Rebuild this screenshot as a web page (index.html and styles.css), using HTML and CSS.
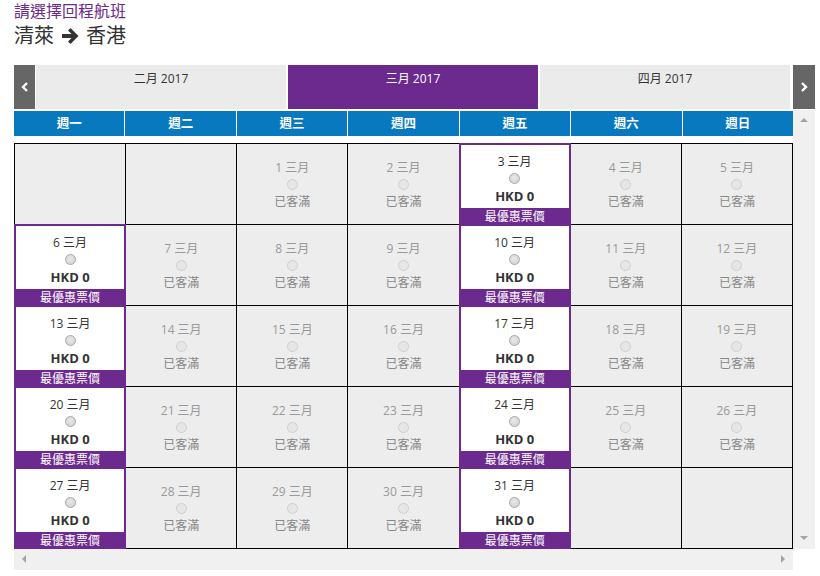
FILE: index.html
```html
<!DOCTYPE html>
<html lang="zh-Hant">
<head>
<meta charset="utf-8">
<link rel="stylesheet" href="styles.css">
</head>
<body>
<div class="page">
  <h1 class="title">請選擇回程航班</h1>
  <div class="route">清萊 <svg class="route-arrow" viewBox="0 0 20 18" width="20" height="18"><path d="M2 7h9.5L8 3.5 10.5 1 18.5 9 10.5 17 8 14.5 11.5 11H2z" fill="#333"/></svg> 香港</div>

  <div class="monthnav">
    <div class="navbtn"><svg viewBox="0 0 8 10" width="8" height="10"><path d="M6 1 2 5 6 9" fill="none" stroke="#fff" stroke-width="2.4"/></svg></div>
    <div class="tab">二月 2017</div>
    <div class="tab active">三月 2017</div>
    <div class="tab">四月 2017</div>
    <div class="navbtn right"><svg viewBox="0 0 8 10" width="8" height="10"><path d="M2 1 6 5 2 9" fill="none" stroke="#fff" stroke-width="2.4"/></svg></div>
  </div>

  <div class="scroller">
    <div class="main">
      <div class="weekdays">
        <div>週一</div><div>週二</div><div>週三</div><div>週四</div><div>週五</div><div>週六</div><div>週日</div>
      </div>
      <div class="grid">
        <div class="cell empty"></div>
        <div class="cell empty"></div>
        <div class="cell full"><div class="info"><div class="date">1 三月</div><span class="radio"></span><div class="status">已客滿</div></div></div>
        <div class="cell full"><div class="info"><div class="date">2 三月</div><span class="radio"></span><div class="status">已客滿</div></div></div>
        <div class="cell avail"><div class="info"><div class="date">3 三月</div><span class="radio"></span><div class="price">HKD 0</div></div><div class="best">最優惠票價</div></div>
        <div class="cell full"><div class="info"><div class="date">4 三月</div><span class="radio"></span><div class="status">已客滿</div></div></div>
        <div class="cell full"><div class="info"><div class="date">5 三月</div><span class="radio"></span><div class="status">已客滿</div></div></div>

        <div class="cell avail"><div class="info"><div class="date">6 三月</div><span class="radio"></span><div class="price">HKD 0</div></div><div class="best">最優惠票價</div></div>
        <div class="cell full"><div class="info"><div class="date">7 三月</div><span class="radio"></span><div class="status">已客滿</div></div></div>
        <div class="cell full"><div class="info"><div class="date">8 三月</div><span class="radio"></span><div class="status">已客滿</div></div></div>
        <div class="cell full"><div class="info"><div class="date">9 三月</div><span class="radio"></span><div class="status">已客滿</div></div></div>
        <div class="cell avail"><div class="info"><div class="date">10 三月</div><span class="radio"></span><div class="price">HKD 0</div></div><div class="best">最優惠票價</div></div>
        <div class="cell full"><div class="info"><div class="date">11 三月</div><span class="radio"></span><div class="status">已客滿</div></div></div>
        <div class="cell full"><div class="info"><div class="date">12 三月</div><span class="radio"></span><div class="status">已客滿</div></div></div>

        <div class="cell avail"><div class="info"><div class="date">13 三月</div><span class="radio"></span><div class="price">HKD 0</div></div><div class="best">最優惠票價</div></div>
        <div class="cell full"><div class="info"><div class="date">14 三月</div><span class="radio"></span><div class="status">已客滿</div></div></div>
        <div class="cell full"><div class="info"><div class="date">15 三月</div><span class="radio"></span><div class="status">已客滿</div></div></div>
        <div class="cell full"><div class="info"><div class="date">16 三月</div><span class="radio"></span><div class="status">已客滿</div></div></div>
        <div class="cell avail"><div class="info"><div class="date">17 三月</div><span class="radio"></span><div class="price">HKD 0</div></div><div class="best">最優惠票價</div></div>
        <div class="cell full"><div class="info"><div class="date">18 三月</div><span class="radio"></span><div class="status">已客滿</div></div></div>
        <div class="cell full"><div class="info"><div class="date">19 三月</div><span class="radio"></span><div class="status">已客滿</div></div></div>

        <div class="cell avail"><div class="info"><div class="date">20 三月</div><span class="radio"></span><div class="price">HKD 0</div></div><div class="best">最優惠票價</div></div>
        <div class="cell full"><div class="info"><div class="date">21 三月</div><span class="radio"></span><div class="status">已客滿</div></div></div>
        <div class="cell full"><div class="info"><div class="date">22 三月</div><span class="radio"></span><div class="status">已客滿</div></div></div>
        <div class="cell full"><div class="info"><div class="date">23 三月</div><span class="radio"></span><div class="status">已客滿</div></div></div>
        <div class="cell avail"><div class="info"><div class="date">24 三月</div><span class="radio"></span><div class="price">HKD 0</div></div><div class="best">最優惠票價</div></div>
        <div class="cell full"><div class="info"><div class="date">25 三月</div><span class="radio"></span><div class="status">已客滿</div></div></div>
        <div class="cell full"><div class="info"><div class="date">26 三月</div><span class="radio"></span><div class="status">已客滿</div></div></div>

        <div class="cell avail"><div class="info"><div class="date">27 三月</div><span class="radio"></span><div class="price">HKD 0</div></div><div class="best">最優惠票價</div></div>
        <div class="cell full"><div class="info"><div class="date">28 三月</div><span class="radio"></span><div class="status">已客滿</div></div></div>
        <div class="cell full"><div class="info"><div class="date">29 三月</div><span class="radio"></span><div class="status">已客滿</div></div></div>
        <div class="cell full"><div class="info"><div class="date">30 三月</div><span class="radio"></span><div class="status">已客滿</div></div></div>
        <div class="cell avail"><div class="info"><div class="date">31 三月</div><span class="radio"></span><div class="price">HKD 0</div></div><div class="best">最優惠票價</div></div>
        <div class="cell empty"></div>
        <div class="cell empty"></div>
      </div>
    </div>
    <div class="vbar"><span class="arr up"></span><span class="arr down"></span></div>
    <div class="hbar"><span class="arr left"></span><span class="arr right"></span></div>
    <div class="corner"></div>
  </div>
</div>
</body>
</html>
```

FILE: styles.css
```css
* { box-sizing: border-box; }
html, body { margin: 0; padding: 0; background: #fff; }
body {
  font-family: "Open Sans", "Noto Sans CJK TC", sans-serif;
  color: #333;
}
.page {
  width: 801px;
  margin-left: 14px;
}
.title {
  margin: 0;
  padding-top: 0;
  font-size: 16px;
  font-weight: normal;
  line-height: 22px;
  color: #6c2a8e;
}
.route {
  font-size: 20px;
  line-height: 26px;
  color: #333;
  display: flex;
  align-items: center;
  gap: 5px;
  margin-top: 1px;
}
.route-arrow { display: block; margin: 0 1px; }

.monthnav {
  margin-top: 16px;
  height: 44px;
  display: flex;
  gap: 2px;
}
.navbtn {
  width: 21px;
  background: #666;
  display: flex;
  align-items: center;
  justify-content: center;
}
.navbtn.right { width: 22px; margin-left: 1px; }
.navbtn:first-child { margin-right: -1px; }
.tab {
  flex: 1;
  background: #ebebeb;
  color: #333;
  font-size: 12px;
  text-align: center;
  padding-top: 4px;
}
.tab.active { background: #6c2a8e; color: #fff; }

.scroller {
  margin-top: 1px;
  display: grid;
  grid-template-columns: 779px 22px;
  grid-template-rows: 439px 21px;
}
.main { overflow: hidden; padding-top: 1px; }
.weekdays {
  display: grid;
  grid-template-columns: repeat(7, 1fr);
  gap: 1px;
  height: 25px;
}
.weekdays div {
  background: #0879bf;
  color: #fff;
  font-weight: bold;
  font-size: 12.5px;
  text-align: center;
  line-height: 25px;
}
.grid {
  margin-top: 7px;
  display: grid;
  grid-template-columns: repeat(7, 1fr);
  grid-auto-rows: 80px;
  gap: 1px;
  padding: 1px;
  background: #000;
}
.cell {
  background: #ededed;
  display: flex;
  flex-direction: column;
  text-align: center;
  position: relative;
}
.cell .info {
  flex: 1;
  display: flex;
  flex-direction: column;
  align-items: center;
  justify-content: center;
}
.date { font-size: 12px; line-height: 17px; }
.radio {
  display: block;
  width: 11px;
  height: 11px;
  border-radius: 50%;
  margin: 3px 0 3px;
}
.full { color: #888; }
.full .date { color: #999; }
.full .radio { border: 1px solid #cfcfcf; background: #e6e6e6; }
.status { font-size: 12px; line-height: 17px; color: #888; }
.avail {
  background: #fff;
  outline: 2px solid #6c2a8e;
  outline-offset: -1px;
  z-index: 1;
}
.avail .info { padding-top: 5px; }
.avail .date { color: #333; }
.avail .radio {
  border: 1px solid #a8a8a8;
  background: radial-gradient(circle at 45% 40%, #e8e8e8, #cfcfcf);
  margin-bottom: 4px;
}
.price { font-weight: bold; font-size: 13px; line-height: 17px; color: #333; }
.best {
  height: 17px;
  background: #6c2a8e;
  color: #fff;
  font-size: 12px;
  line-height: 17px;
  margin: 0 -1px -1px;
}

.vbar {
  background: #f0f0f0;
  position: relative;
}
.hbar {
  background: #f0f0f0;
  position: relative;
}
.corner { background: #fff; }
.arr { position: absolute; width: 0; height: 0; }
.arr.up { left: 7px; top: 8px; border-left: 4px solid transparent; border-right: 4px solid transparent; border-bottom: 4px solid #a3a3a3; }
.arr.down { left: 7px; bottom: 9px; border-left: 4px solid transparent; border-right: 4px solid transparent; border-top: 4px solid #a3a3a3; }
.arr.left { left: 8px; top: 6px; border-top: 4px solid transparent; border-bottom: 4px solid transparent; border-right: 4px solid #a3a3a3; }
.arr.right { right: 8px; top: 6px; border-top: 4px solid transparent; border-bottom: 4px solid transparent; border-left: 4px solid #a3a3a3; }
```
